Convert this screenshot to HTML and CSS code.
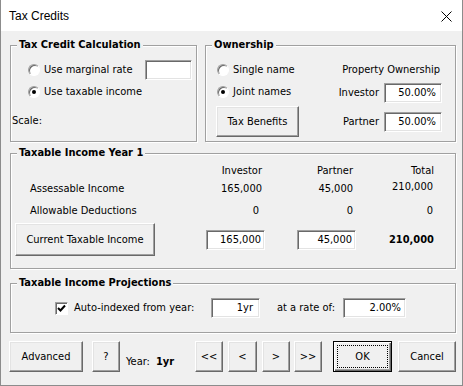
FILE: index.html
```html
<!DOCTYPE html>
<html lang="en">
<head>
    <meta charset="utf-8">
    <title>Tax Credits</title>
    <link rel="stylesheet" href="styles.css">
</head>
<body>
    <div class="dialog">
        <div class="titlebar">
            <span class="title">Tax Credits</span>
            <svg class="close" width="11" height="11" viewBox="0 0 11 11">
                <path d="M0.5 0.5 L10.5 10.5 M10.5 0.5 L0.5 10.5" stroke="#000" stroke-width="1" fill="none"/>
            </svg>
        </div>

        <div class="client">
            <div class="top-row">
                <div class="frame calc">
                    <div class="legend">Tax Credit Calculation</div>
                    <div class="opt-row">
                        <span class="radio"></span>
                        <span>Use marginal rate</span>
                        <span class="field rate-field"></span>
                    </div>
                    <div class="opt-row second">
                        <span class="radio checked"></span>
                        <span>Use taxable income</span>
                    </div>
                    <div class="scale">Scale:</div>
                </div>

                <div class="frame ownership">
                    <div class="legend">Ownership</div>
                    <div class="own-body">
                        <div class="own-left">
                            <div class="opt-row">
                                <span class="radio"></span>
                                <span>Single name</span>
                            </div>
                            <div class="opt-row second">
                                <span class="radio checked"></span>
                                <span>Joint names</span>
                            </div>
                            <button class="btn benefits">Tax Benefits</button>
                        </div>
                        <div class="own-right">
                            <div class="own-caption">Property Ownership</div>
                            <div class="share-row first">
                                <span>Investor</span>
                                <span class="field share-field">50.00%</span>
                            </div>
                            <div class="share-row">
                                <span>Partner</span>
                                <span class="field share-field">50.00%</span>
                            </div>
                        </div>
                    </div>
                </div>
            </div>

            <div class="frame year1">
                <div class="legend">Taxable Income Year 1</div>
                <div class="income-grid">
                    <span></span>
                    <span class="num">Investor</span>
                    <span class="num">Partner</span>
                    <span class="num">Total</span>

                    <span class="row-label">Assessable Income</span>
                    <span class="num">165,000</span>
                    <span class="num">45,000</span>
                    <span class="num total raised">210,000</span>

                    <span class="row-label">Allowable Deductions</span>
                    <span class="num zero">0</span>
                    <span class="num">0</span>
                    <span class="num total">0</span>

                    <button class="btn current">Current Taxable Income</button>
                    <span class="field income-field">165,000</span>
                    <span class="field income-field partner">45,000</span>
                    <span class="num total grand">210,000</span>
                </div>
            </div>

            <div class="frame proj">
                <div class="legend">Taxable Income Projections</div>
                <div class="proj-row">
                    <span class="check">
                        <svg width="9" height="9" viewBox="0 0 9 9">
                            <path d="M1 4 L3.5 6.5 L8 1.5" stroke="#000" stroke-width="2" fill="none"/>
                        </svg>
                    </span>
                    <span class="proj-label">Auto-indexed from year:</span>
                    <span class="field year-field">1yr</span>
                    <span class="rate-label">at a rate of:</span>
                    <span class="field growth-field">2.00%</span>
                </div>
            </div>

            <div class="button-bar">
                <button class="btn advanced">Advanced</button>
                <button class="btn help">?</button>
                <span class="year">Year:<b>1yr</b></span>
                <button class="btn nav">&lt;&lt;</button>
                <button class="btn nav prev">&lt;</button>
                <button class="btn nav">&gt;</button>
                <button class="btn nav last">&gt;&gt;</button>
                <button class="btn ok">OK</button>
                <button class="btn cancel">Cancel</button>
            </div>
        </div>
    </div>
</body>
</html>
```

FILE: styles.css
```css
html, body {
    margin: 0;
    padding: 0;
    background: #f0f0f0;
}
.dialog {
    width: 463px;
    height: 386px;
    box-sizing: border-box;
    border: 1px solid #8c8c8c;
    border-top: none;
    background: #f0f0f0;
    color: #000;
    font-family: "DejaVu Sans Condensed", "DejaVu Sans", Tahoma, sans-serif;
    font-stretch: condensed;
    font-size: 11px;
    line-height: 14px;
}
.titlebar {
    height: 31px;
    background: #fff;
    display: flex;
    align-items: center;
    justify-content: space-between;
    padding: 0 10px 0 8px;
}
.title {
    font-family: "Liberation Sans", Arial, sans-serif;
    font-stretch: normal;
    font-size: 12px;
}
.close {
    margin-top: 1px;
}
.client {
    padding: 14px 0 0 9px;
}

/* frames */
.frame {
    position: relative;
    box-sizing: border-box;
    border: 1px solid #a0a0a0;
    box-shadow: inset 1px 1px 0 #fff, 1px 1px 0 #fff;
}
.legend {
    position: absolute;
    top: -8px;
    left: 6px;
    padding: 0 2px;
    background: #f0f0f0;
    font-weight: bold;
}
.top-row {
    display: flex;
    gap: 8px;
}
.calc {
    width: 187px;
    height: 97px;
    padding: 14px 4px 0 1px;
}
.ownership {
    width: 251px;
    height: 97px;
}
.year1 {
    width: 446px;
    height: 116px;
    margin-top: 11px;
}
.proj {
    width: 446px;
    height: 50px;
    margin-top: 14px;
}

/* controls */
.opt-row {
    display: flex;
    align-items: center;
    height: 20px;
    padding-left: 16px;
}
.opt-row.second {
    margin-top: 2px;
}
.radio {
    position: relative;
    flex: none;
    width: 12px;
    height: 12px;
    box-sizing: border-box;
    margin-right: 4px;
    border-radius: 50%;
    background: #fff;
    border: 1px solid;
    border-color: #a0a0a0 #fff #fff #a0a0a0;
    box-shadow: inset 1px 1px 0 #696969;
}
.radio.checked::after {
    content: "";
    position: absolute;
    left: 3px;
    top: 3px;
    width: 4px;
    height: 4px;
    border-radius: 50%;
    background: #000;
}
.check {
    flex: none;
    width: 13px;
    height: 13px;
    box-sizing: border-box;
    margin-right: 6px;
    background: #fff;
    border: 1px solid;
    border-color: #a0a0a0 #fff #fff #a0a0a0;
    box-shadow: inset 1px 1px 0 #696969;
    display: flex;
    align-items: center;
    justify-content: center;
}
.field {
    flex: none;
    box-sizing: border-box;
    height: 20px;
    background: #fff;
    border: 1px solid;
    border-color: #a0a0a0 #fff #fff #a0a0a0;
    box-shadow: inset 1px 1px 0 #696969, inset -1px -1px 0 #e3e3e3;
    display: flex;
    align-items: center;
    justify-content: flex-end;
    padding-right: 3px;
}
.btn {
    flex: none;
    box-sizing: border-box;
    height: 31px;
    margin: 0;
    padding: 0;
    background: #f0f0f0;
    color: #000;
    font: inherit;
    font-stretch: condensed;
    border: 1px solid;
    border-color: #fff #696969 #696969 #fff;
    box-shadow: inset -1px -1px 0 #a0a0a0, inset 1px 1px 0 #e3e3e3;
}

/* tax credit calculation */
.rate-field {
    width: 47px;
    margin-left: auto;
}
.scale {
    height: 20px;
    margin-top: 9px;
    line-height: 20px;
}

/* ownership */
.own-body {
    display: flex;
    justify-content: space-between;
    padding: 14px 13px 0 10px;
}
.own-left {
    display: flex;
    flex-direction: column;
    align-items: flex-start;
}
.own-left .opt-row {
    padding-left: 1px;
}
.benefits {
    width: 83px;
    margin-top: 4px;
}
.own-right {
    display: flex;
    flex-direction: column;
    align-items: flex-end;
}
.own-caption {
    height: 20px;
    line-height: 20px;
    padding-right: 2px;
}
.share-row {
    display: flex;
    align-items: center;
    gap: 5px;
    margin-top: 9px;
}
.share-row.first {
    margin-top: 3px;
}
.share-field {
    width: 58px;
    padding-right: 5px;
}

/* taxable income year 1 */
.income-grid {
    display: grid;
    grid-template-columns: 191px 59px 91px 81px;
    grid-template-rows: 17px 20px 24px 33px;
    align-items: center;
    padding: 8px 0 0 4px;
}
.row-label {
    padding-left: 15px;
}
.num {
    text-align: right;
    padding-right: 3px;
}
.num.zero {
    padding-right: 6px;
}
.num.total {
    padding-right: 4px;
}
.num.raised {
    margin-top: -4px;
}
.num.grand {
    padding-right: 3px;
    font-weight: bold;
}
.current {
    width: 140px;
    height: 33px;
}
.income-field {
    width: 59px;
}
.income-field.partner {
    justify-self: end;
}

/* projections */
.proj-row {
    display: flex;
    align-items: center;
    height: 20px;
    padding: 14px 0 0 44px;
}
.proj-label {
    width: 137px;
}
.year-field {
    width: 49px;
    padding-right: 6px;
}
.rate-label {
    width: 83px;
    box-sizing: border-box;
    padding-left: 17px;
}
.growth-field {
    width: 63px;
    padding-right: 4px;
}

/* bottom buttons */
.button-bar {
    display: flex;
    align-items: center;
    margin-top: 8px;
    margin-left: -1px;
}
.advanced {
    width: 74px;
}
.help {
    width: 28px;
    margin-left: 9px;
}
.year {
    width: 69px;
    margin-left: 6px;
    padding-top: 10px;
}
.year b {
    margin-left: 6px;
}
.nav {
    width: 28px;
    margin-right: 5px;
}
.nav.prev {
    width: 29px;
}
.nav.last {
    margin-left: -1px;
    margin-right: 11px;
}
.ok {
    position: relative;
    width: 59px;
    margin-right: 6px;
    border-color: #000;
    box-shadow: inset 1px 1px 0 #fff, inset -1px -1px 0 #696969, inset -2px -2px 0 #a0a0a0;
}
.ok::after {
    content: "";
    position: absolute;
    inset: 3px;
    border: 1px dotted #000;
}
.cancel {
    width: 58px;
}
```
